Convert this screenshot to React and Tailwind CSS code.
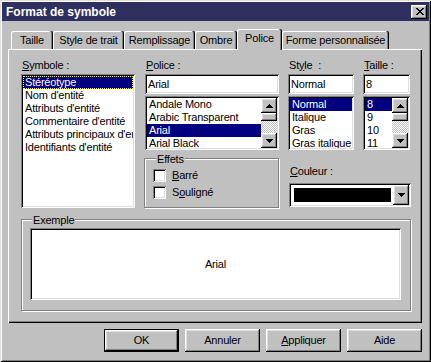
import React from "react";

const sunken =
  "shadow-[inset_1px_1px_#808080,inset_-1px_-1px_#ffffff,inset_2px_2px_#000000,inset_-2px_-2px_#dfdfdf]";
const raised =
  "shadow-[inset_-1px_-1px_#000000,inset_1px_1px_#ffffff,inset_-2px_-2px_#808080,inset_2px_2px_#dfdfdf]";
const checker =
  "bg-[repeating-conic-gradient(#ffffff_0_25%,#c0c0c0_0_50%)] bg-[length:2px_2px]";

function UpArrow() {
  return (
    <svg width="7" height="4" viewBox="0 0 7 4" shapeRendering="crispEdges">
      <path d="M3 0h1v1h-1zM2 1h3v1h-3zM1 2h5v1h-5zM0 3h7v1h-7z" fill="#000" />
    </svg>
  );
}
function DownArrow() {
  return (
    <svg width="7" height="4" viewBox="0 0 7 4" shapeRendering="crispEdges">
      <path d="M0 0h7v1h-7zM1 1h5v1h-5zM2 2h3v1h-3zM3 3h1v1h-1z" fill="#000" />
    </svg>
  );
}
function CloseX() {
  return (
    <svg width="8" height="7" viewBox="0 0 8 7" shapeRendering="crispEdges">
      <path
        d="M0 0h2v1h-2zM6 0h2v1h-2zM1 1h2v1h-2zM5 1h2v1h-2zM2 2h4v1h-4zM3 3h2v1h-2zM2 4h4v1h-4zM1 5h2v1h-2zM5 5h2v1h-2zM0 6h2v1h-2zM6 6h2v1h-2z"
        fill="#000"
      />
    </svg>
  );
}

function ScrollBar() {
  return (
    <div className="flex flex-col w-[16px] h-full shrink-0">
      <div className={`h-[15px] bg-[#c0c0c0] ${raised} flex items-center justify-center`}>
        <UpArrow />
      </div>
      <div className={`h-[8px] bg-[#c0c0c0] ${raised}`} />
      <div className={`flex-1 ${checker}`} />
      <div className={`h-[15px] bg-[#c0c0c0] ${raised} flex items-center justify-center`}>
        <DownArrow />
      </div>
    </div>
  );
}

function ListBox({ items, selected, className, scroll, focus }) {
  return (
    <div className={`bg-white p-[2px] flex overflow-hidden ${sunken} ${className}`}>
      <div className="flex-1 min-w-0 h-full overflow-hidden">
        {items.map((it, i) => (
          <div
            key={it}
            className={`h-[13px] leading-[13px] px-[2px] whitespace-nowrap overflow-hidden ${
              i === selected ? "bg-[#000080] text-white" : ""
            } ${i === selected && focus ? "outline-1 outline-dotted outline-[#ffff00] -outline-offset-1" : ""}`}
          >
            {it}
          </div>
        ))}
      </div>
      {scroll && <ScrollBar />}
    </div>
  );
}

function TextField({ value, className }) {
  return (
    <div className={`bg-white h-[20px] pl-[3px] flex items-center ${sunken} ${className}`}>
      <span className="leading-[13px]">{value}</span>
    </div>
  );
}

function Label({ children }) {
  return <div className="h-[15px] leading-[13px] pl-[1px] whitespace-nowrap">{children}</div>;
}

function Checkbox({ children }) {
  return (
    <div className="flex items-center h-[13px]">
      <div className={`w-[13px] h-[13px] bg-white ${sunken}`} />
      <span className="ml-[6px] leading-[13px]">{children}</span>
    </div>
  );
}

function Tab({ label, w, active }) {
  if (active) {
    return (
      <div
        className={`relative z-10 h-[21px] -mb-px bg-[#c0c0c0] rounded-t-[2px] shadow-[inset_-1px_0_#000000,inset_-2px_0_#808080,inset_1px_1px_#ffffff] flex justify-center pt-[3px] ${w}`}
      >
        <span className="leading-[13px]">{label}</span>
      </div>
    );
  }
  return (
    <div
      className={`h-[18px] bg-[#c0c0c0] rounded-t-[2px] shadow-[inset_-1px_0_#000000,inset_-2px_0_#808080,inset_1px_1px_#ffffff] flex justify-center pt-[3px] ${w}`}
    >
      <span className="leading-[13px]">{label}</span>
    </div>
  );
}

function Button({ children, def }) {
  return (
    <div
      className={`w-[75px] h-[23px] bg-[#c0c0c0] flex items-center justify-center ${
        def
          ? "shadow-[inset_0_0_0_1px_#000000,inset_-2px_-2px_#000000,inset_2px_2px_#ffffff,inset_-3px_-3px_#808080,inset_3px_3px_#dfdfdf]"
          : raised
      }`}
    >
      <span className="leading-[13px]">{children}</span>
    </div>
  );
}

export default function App() {
  return (
    <div
      className={`w-[431px] h-[362px] bg-[#c0c0c0] p-[2px] text-[11px] tracking-[-0.2px] text-black font-['Liberation_Sans',Arial,sans-serif] shadow-[inset_1px_1px_#dfdfdf,inset_-1px_-1px_#000000,inset_2px_2px_#ffffff,inset_-2px_-2px_#808080] overflow-hidden`}
    >
      {/* title bar */}
      <div className="h-[19px] w-[427px] bg-[#303060] flex items-center justify-between pl-[4px] pr-[2px]">
        <span className="text-white font-bold text-[12px] tracking-normal leading-[14px]">Format de symbole</span>
        <div className={`w-[16px] h-[14px] bg-[#c0c0c0] ${raised} flex items-center justify-center pl-px`}>
          <CloseX />
        </div>
      </div>

      {/* tabs */}
      <div className="mt-[8px] h-[20px] flex items-end pl-[9px]">
        <Tab label="Taille" w="w-[42px]" />
        <Tab label="Style de trait" w="w-[71px]" />
        <Tab label="Remplissage" w="w-[71px]" />
        <Tab label="Ombre" w="w-[42px]" />
        <Tab label="Police" w="w-[45px]" active />
        <Tab label="Forme personnalisée" w="w-[107px]" />
      </div>

      {/* panel */}
      <div className="ml-[6px] w-[414px] h-[274px] pt-[10px] pl-[13px] shadow-[inset_1px_1px_#ffffff,inset_-1px_-1px_#000000,inset_-2px_-2px_#808080]">
        <div className="flex h-[149px]">
          {/* Symbole */}
          <div className="w-[114px] flex flex-col">
            <Label>
              <u>S</u>ymbole :
            </Label>
            <ListBox
              className="h-[134px]"
              items={[
                "Stéréotype",
                "Nom d'entité",
                "Attributs d'entité",
                "Commentaire d'entité",
                "Attributs principaux d'entité",
                "Identifiants d'entité",
              ]}
              selected={0}
              focus
            />
          </div>

          {/* Police */}
          <div className="ml-[10px] w-[134px] flex flex-col">
            <Label>
              <u>P</u>olice :
            </Label>
            <TextField value="Arial" />
            <ListBox
              className="mt-[2px] h-[54px]"
              items={["Andale Mono", "Arabic Transparent", "Arial", "Arial Black"]}
              selected={2}
              scroll
            />
            <div className="relative mt-[8px] -ml-px w-[135px] h-[50px] border border-[#808080] shadow-[inset_1px_1px_#ffffff,1px_1px_#ffffff] pt-[10px] pl-[8px] flex flex-col gap-[4px]">
              <div className="absolute left-[11px] -top-[6px] px-[1px] bg-[#c0c0c0] leading-[13px]">Effets</div>
              <Checkbox>
                <u>B</u>arré
              </Checkbox>
              <Checkbox>
                S<u>o</u>uligné
              </Checkbox>
            </div>
          </div>

          {/* Style + Taille + Couleur */}
          <div className="ml-[9px] flex flex-col">
            <div className="flex">
              <div className="w-[66px] flex flex-col">
                <Label>
                  St<u>y</u>le&nbsp;&nbsp;:
                </Label>
                <TextField value="Normal" />
                <ListBox
                  className="mt-[2px] h-[54px]"
                  items={["Normal", "Italique", "Gras", "Gras italique"]}
                  selected={0}
                />
              </div>
              <div className="ml-[9px] w-[47px] flex flex-col">
                <Label>
                  <u>T</u>aille :
                </Label>
                <TextField value="8" />
                <ListBox className="mt-[2px] h-[54px]" items={["8", "9", "10", "11"]} selected={0} scroll />
              </div>
            </div>
            <div className="mt-[15px] h-[13px] leading-[13px] pl-[2px]">
              <u>C</u>ouleur :
            </div>
            <div className={`mt-[5px] ml-px w-[122px] h-[24px] bg-white p-[2px] flex ${sunken}`}>
              <div className="flex-1 pl-[3px] pr-[2px] py-[3px]">
                <div className="w-full h-full bg-black" />
              </div>
              <div className={`w-[16px] h-full bg-[#c0c0c0] ${raised} flex items-center justify-center`}>
                <DownArrow />
              </div>
            </div>
          </div>
        </div>

        {/* Exemple */}
        <div className="relative mt-[11px] w-[390px] h-[92px] border border-[#808080] shadow-[inset_1px_1px_#ffffff,1px_1px_#ffffff] pt-[8px] pl-[8px]">
          <div className="absolute left-[10px] -top-[6px] px-[1px] bg-[#c0c0c0] leading-[13px]">Exemple</div>
          <div className={`w-[371px] h-[72px] bg-white flex items-center justify-center ${sunken}`}>
            <span className="leading-[13px]">Arial</span>
          </div>
        </div>
      </div>

      {/* buttons */}
      <div className="mt-[6px] ml-[6px] w-[414px] flex justify-end gap-[6px]">
        <Button def>OK</Button>
        <Button>Annuler</Button>
        <Button>
          <u>A</u>ppliquer
        </Button>
        <Button>Aide</Button>
      </div>
    </div>
  );
}
